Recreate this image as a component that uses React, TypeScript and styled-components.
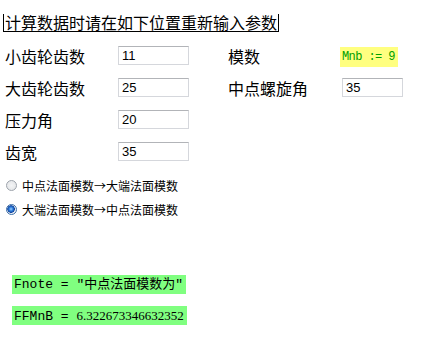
import React from 'react'
import styled, { createGlobalStyle } from 'styled-components'

const GlobalStyle = createGlobalStyle`
  body {
    margin: 0;
    background: #ffffff;
    font-family: "Noto Sans CJK SC", "Liberation Sans", sans-serif;
  }
`

const Page = styled.div`
  width: 437px;
  height: 339px;
  padding: 14px 0 0 3px;
  box-sizing: border-box;
  display: flex;
  flex-direction: column;
  align-items: flex-start;
`

const Title = styled.div`
  font-size: 16px;
  line-height: 17px;
  height: 17px;
  padding: 0 1px;
  border: 1px solid #000;
  border-top: none;
  color: #000;
`

const Form = styled.div`
  display: grid;
  grid-template-columns: 113px 110px 112px auto;
  grid-auto-rows: 32px;
  margin: 6px 0 0 2px;
  align-items: center;
`

const Label = styled.div`
  font-size: 16px;
  line-height: 19px;
  color: #000;
  padding-top: 5px;
`

const Field = styled.input<{ $w?: number }>`
  width: ${p => p.$w ?? 71}px;
  height: 19px;
  box-sizing: border-box;
  border: 1px solid #d5d7dc;
  border-top-color: #b2b4b8;
  padding: 0 3px;
  font-family: "Liberation Sans", Arial, sans-serif;
  font-size: 13px;
  color: #000;
  outline: none;
  margin-bottom: 2px;
`

const Calc = styled.span<{ $bg: string; $color?: string; $tight?: boolean }>`
  display: inline-block;
  background: ${p => p.$bg};
  color: ${p => p.$color ?? '#000'};
  font-family: "Liberation Mono", "Noto Sans CJK SC", monospace;
  font-size: ${p => (p.$tight ? 12 : 13)}px;
  letter-spacing: ${p => (p.$tight ? '-0.6px' : '0')};
  line-height: ${p => (p.$tight ? 20 : 19)}px;
  height: ${p => (p.$tight ? 20 : 19)}px;
  padding: 0 3px 0 2px;
  white-space: nowrap;
`

const Num = styled.span`
  font-family: "Liberation Serif", serif;
  font-size: 13px;
`

const Radios = styled.div`
  display: flex;
  flex-direction: column;
  gap: 7px;
  margin: 11px 0 0 3px;
`

const RadioRow = styled.label`
  display: flex;
  align-items: center;
  gap: 5px;
  font-size: 12px;
  line-height: 17px;
  color: #000;
`

const Dot = styled.span<{ $on?: boolean }>`
  width: 11px;
  height: 11px;
  border-radius: 50%;
  box-sizing: border-box;
  border: 1px solid ${p => (p.$on ? '#3c6fa8' : '#9da3ab')};
  background: ${p =>
    p.$on
      ? 'radial-gradient(circle at 45% 45%, #9fd0ff 0, #2a7ad8 2px, #1546a0 3.5px, #e6eaf0 4px, #fafbfc 100%)'
      : 'radial-gradient(circle at 50% 50%, #f4f5f6 0, #e0e2e5 100%)'};
`

const Results = styled.div`
  display: flex;
  flex-direction: column;
  align-items: flex-start;
  gap: 12px;
  margin: 57px 0 0 9px;
`

const Cell = styled.div<{ $pad?: number }>`
  padding-left: ${p => p.$pad ?? 0}px;
`

export default function App() {
  return (
    <Page>
      <GlobalStyle />
      <Title>计算数据时请在如下位置重新输入参数</Title>
      <Form>
        <Label>小齿轮齿数</Label>
        <Cell><Field defaultValue="11" /></Cell>
        <Label>模数</Label>
        <Cell>
          <Calc $bg="#ffff80" $color="#00a000" $tight>Mnb := 9</Calc>
        </Cell>

        <Label>大齿轮齿数</Label>
        <Cell><Field defaultValue="25" /></Cell>
        <Label>中点螺旋角</Label>
        <Cell $pad={2}><Field $w={61} defaultValue="35" /></Cell>

        <Label>压力角</Label>
        <Cell><Field defaultValue="20" /></Cell>
        <Cell />
        <Cell />

        <Label>齿宽</Label>
        <Cell><Field defaultValue="35" /></Cell>
        <Cell />
        <Cell />
      </Form>
      <Radios>
        <RadioRow><Dot />中点法面模数→大端法面模数</RadioRow>
        <RadioRow><Dot $on />大端法面模数→中点法面模数</RadioRow>
      </Radios>
      <Results>
        <Calc $bg="#80ff80">Fnote = "中点法面模数为"</Calc>
        <Calc $bg="#80ff80">FFMnB = <Num>6.322673346632352</Num></Calc>
      </Results>
    </Page>
  )
}
